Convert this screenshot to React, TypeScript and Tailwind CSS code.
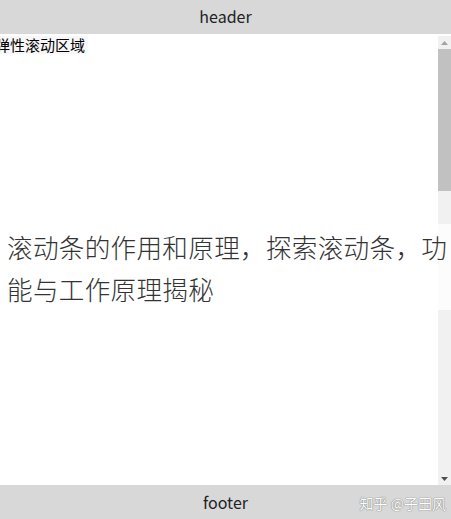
import React from 'react';

const font = { fontFamily: '"Noto Sans CJK SC", "Open Sans", "Liberation Sans", sans-serif' };

const ScrollBar = () => (
  <div className="w-[13px] shrink-0 flex flex-col bg-[#f1f1f1]">
    <div className="h-[13px] flex items-center justify-center">
      <svg width="7" height="4" viewBox="0 0 7 4">
        <path d="M3.5 0 L7 4 L0 4 Z" fill="#a3a3a3" />
      </svg>
    </div>
    <div className="h-[142px] bg-[#c1c1c1]" />
    <div className="flex-1" />
    <div className="h-[13px] flex items-center justify-center">
      <svg width="7" height="4" viewBox="0 0 7 4">
        <path d="M0 0 L7 0 L3.5 4 Z" fill="#505050" />
      </svg>
    </div>
  </div>
);

export default function App() {
  return (
    <div className="w-[451px] h-[519px] flex flex-col bg-white overflow-hidden" style={font}>
      <header className="h-[34px] shrink-0 bg-[#d8d8d8] flex items-center justify-center pb-[3px] text-[16px] text-[#222]">
        header
      </header>

      <div className="relative flex-1 flex min-h-0 pt-[2px]">
        <main className="flex-1 overflow-hidden">
          <div className="-ml-[5px] w-fit bg-[#f7f7f7] pr-[3px] text-[15px] leading-[18px] text-black">
            弹性滚动区域
          </div>
        </main>
        <ScrollBar />

        {/* title overlay */}
        <div className="absolute left-0 right-0 top-[190px] h-[86px] bg-white/80 pl-[7px] pt-[2px]">
          <p className="text-[25.6px] leading-[42px] font-light text-[#333] tracking-[0.3px]">
            滚动条的作用和原理，探索滚动条，功能与工作原理揭秘
          </p>
        </div>
      </div>

      <footer className="relative h-[34px] shrink-0 bg-[#d8d8d8] flex items-center justify-center text-[16px] text-[#222]">
        footer
        <span
          className="absolute right-[5px] top-[8px] text-[14px] text-white"
          style={{ textShadow: '0 0 1px #777, 0 0 1px #777' }}
        >
          知乎 @子田风
        </span>
      </footer>
    </div>
  );
}
